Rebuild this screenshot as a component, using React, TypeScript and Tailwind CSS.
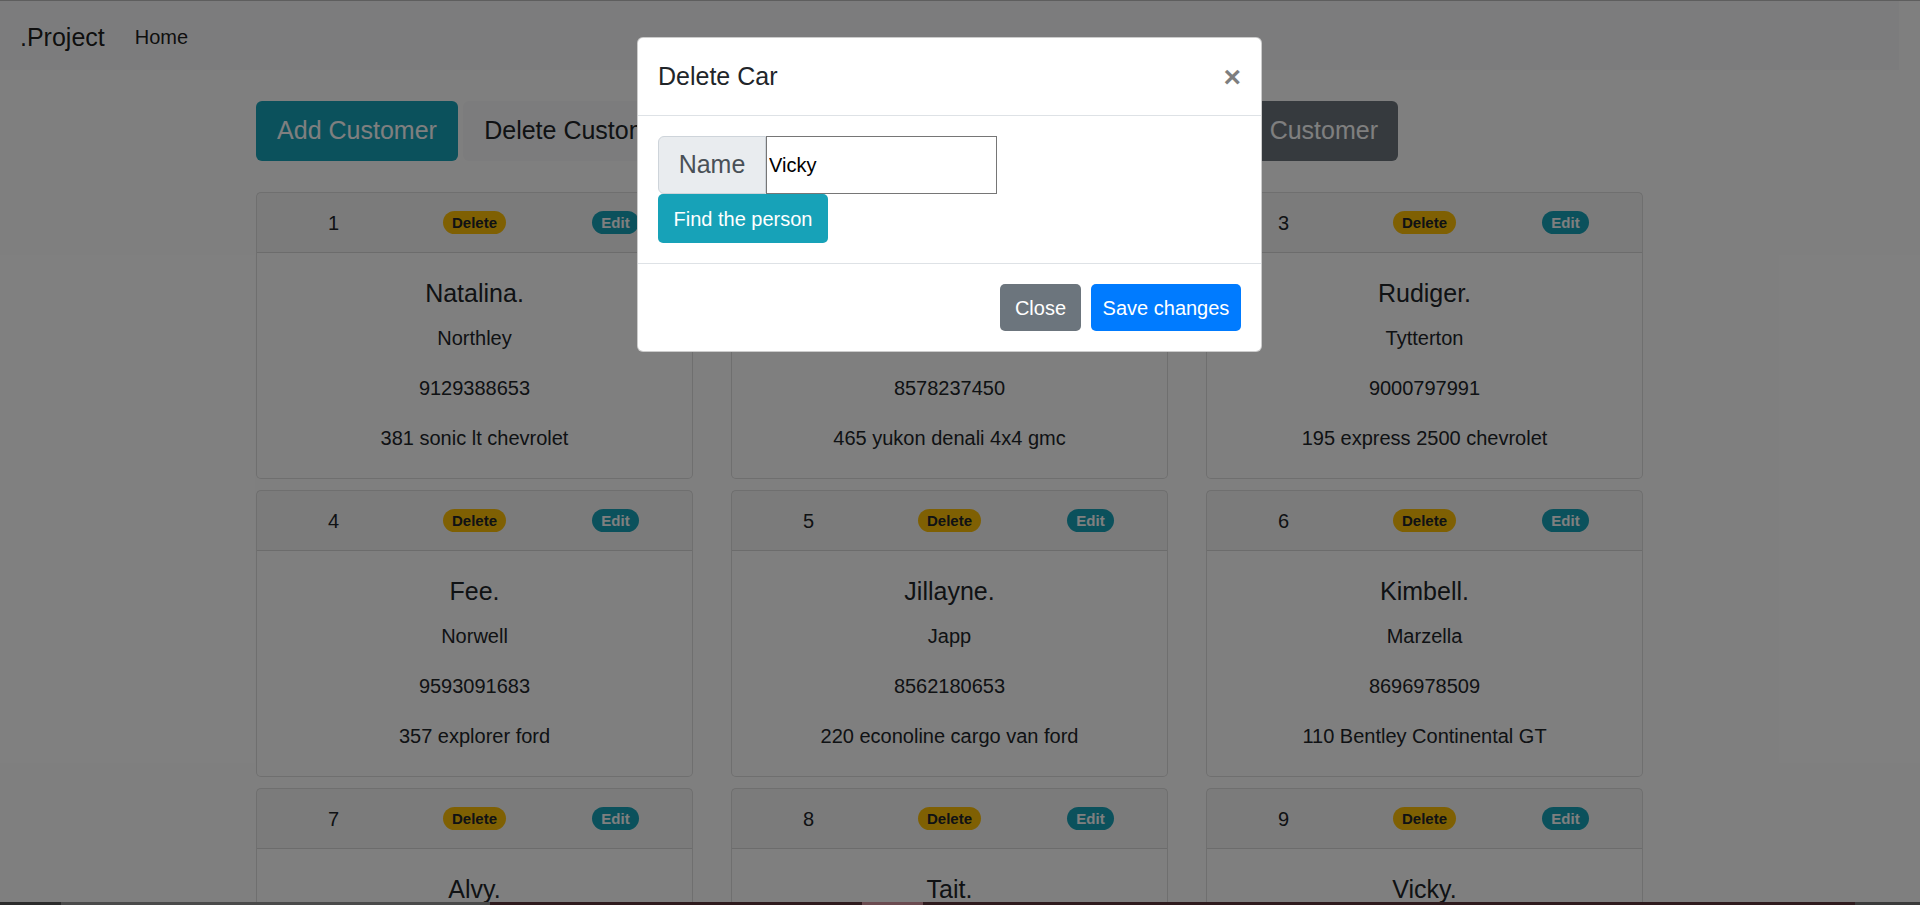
import React from "react";

interface Customer {
  id: number;
  name: string;
  city: string;
  phone: string;
  car: string;
}

const customers: Customer[] = [
  { id: 1, name: "Natalina.", city: "Northley", phone: "9129388653", car: "381 sonic lt chevrolet" },
  { id: 2, name: "Gerianne.", city: "Marlow", phone: "8578237450", car: "465 yukon denali 4x4 gmc" },
  { id: 3, name: "Rudiger.", city: "Tytterton", phone: "9000797991", car: "195 express 2500 chevrolet" },
  { id: 4, name: "Fee.", city: "Norwell", phone: "9593091683", car: "357 explorer ford" },
  { id: 5, name: "Jillayne.", city: "Japp", phone: "8562180653", car: "220 econoline cargo van ford" },
  { id: 6, name: "Kimbell.", city: "Marzella", phone: "8696978509", car: "110 Bentley Continental GT" },
  { id: 7, name: "Alvy.", city: "Brookfield", phone: "9812337640", car: "512 silverado 1500 chevrolet" },
  { id: 8, name: "Tait.", city: "Lindon", phone: "8722910543", car: "240 ranger ford" },
  { id: 9, name: "Vicky.", city: "Harwell", phone: "9045518276", car: "318 tahoe chevrolet" },
];

function CustomerCard({ c }: { c: Customer }) {
  return (
    <div className="flex flex-col rounded-[5px] border border-black/[0.125] bg-white">
      <div className="h-[60px] border-b border-black/[0.125] bg-black/[0.03] px-[25px]">
        <div className="-mx-[19px] grid h-full grid-cols-3 items-center text-center">
          <span className="text-[20px] leading-[30px]">{c.id}</span>
          <span>
            <span className="inline-block rounded-full bg-[#ffc107] px-[9px] py-[4px] text-[15px] font-bold leading-none text-[#212529]">
              Delete
            </span>
          </span>
          <span>
            <span className="inline-block rounded-full bg-[#17a2b8] px-[9px] py-[4px] text-[15px] font-bold leading-none text-white">
              Edit
            </span>
          </span>
        </div>
      </div>
      <div className="p-[25px] text-center">
        <h5 className="mb-[15px] text-[25px] font-medium leading-[30px]">{c.name}</h5>
        <p className="mb-[20px] text-[20px] leading-[30px]">{c.city}</p>
        <p className="mb-[20px] text-[20px] leading-[30px]">{c.phone}</p>
        <p className="text-[20px] leading-[30px]">{c.car}</p>
      </div>
    </div>
  );
}

export default function App() {
  return (
    <div className="relative h-[905px] w-[1920px] overflow-hidden bg-white font-['Liberation_Sans',Arial,sans-serif] text-[#212529]">
      {/* page under the backdrop */}
      <div className="pr-[21px]">
        <nav className="flex h-[70px] items-center bg-[#f8f9fa] px-[20px] pt-[4px]">
          <span className="mr-[20px] text-[25px] leading-[37px] text-black/90">.Project</span>
          <a className="px-[10px] text-[20px] leading-[30px] text-black/90">Home</a>
        </nav>

        <main className="mx-auto w-[1387px] pt-[31px]">
          <div className="flex gap-[5px]">
            <button className="flex h-[60px] w-[202px] items-center justify-center rounded-[6px] bg-[#17a2b8] text-[25px] text-white">
              Add Customer
            </button>
            <button className="flex h-[60px] w-[230px] items-center justify-center rounded-[6px] bg-[#f8f9fa] text-[25px] text-[#212529]">
              Delete Customer
            </button>
            <button className="flex h-[60px] w-[238px] items-center justify-center rounded-[6px] bg-[#ffc107] text-[25px] text-[#212529]">
              Update Customer
            </button>
            <button className="flex h-[60px] w-[246px] items-center justify-center rounded-[6px] bg-[#28a745] text-[25px] text-white">
              Show Customers
            </button>
            <button className="flex h-[60px] w-[206px] items-center justify-end rounded-[6px] bg-[#6c757d] pr-[20px] text-[25px] text-white">
              Find Customer
            </button>
          </div>

          <div className="mt-[31px] grid grid-cols-3 gap-x-[38px] gap-y-[11px]">
            {customers.map((c) => (
              <CustomerCard key={c.id} c={c} />
            ))}
          </div>
        </main>
      </div>

      {/* backdrop */}
      <div className="absolute inset-0 bg-black/50" />
      <div className="absolute left-0 right-0 top-0 h-px bg-[#5e5e5e]" />

      {/* modal */}
      <div className="absolute inset-0 flex items-start justify-center pr-[21px] pt-[37px]">
        <div className="w-[625px] rounded-[6px] border border-black/20 bg-white">
          <div className="flex items-center justify-between border-b border-[#dee2e6] p-[20px]">
            <h5 className="text-[25px] font-medium leading-[37px]">Delete Car</h5>
            <button className="text-[30px] font-bold leading-none text-black opacity-50">×</button>
          </div>
          <div className="p-[20px]">
            <div className="flex h-[58px]">
              <span className="flex w-[108px] items-center justify-center rounded-l-[6px] border border-[#ced4da] bg-[#e9ecef] text-[25px] text-[#495057]">
                Name
              </span>
              <input
                readOnly
                defaultValue="Vicky"
                className="w-[231px] border border-[#767676] bg-white px-[2px] text-[20px] text-black outline-none"
              />
            </div>
            <button className="flex h-[49px] w-[170px] items-center justify-center rounded-[5px] bg-[#17a2b8] text-[20px] text-white">
              Find the person
            </button>
          </div>
          <div className="flex justify-end gap-[10px] border-t border-[#dee2e6] p-[20px]">
            <button className="flex h-[47px] w-[81px] items-center justify-center rounded-[5px] bg-[#6c757d] text-[20px] text-white">
              Close
            </button>
            <button className="flex h-[47px] w-[150px] items-center justify-center rounded-[5px] bg-[#007bff] text-[20px] text-white">
              Save changes
            </button>
          </div>
        </div>
      </div>

      {/* strip along the bottom edge */}
      <div className="absolute bottom-0 left-0 right-0 flex h-[3px]">
        <div className="w-[61px] bg-[#2b2b2b]" />
        <div className="w-[429px] bg-[#4a4a4a]" />
        <div className="w-[372px] bg-[#2f1b1e]" />
        <div className="w-[61px] bg-[#6b4b50]" />
        <div className="w-[932px] bg-[#2f1b1e]" />
        <div className="flex-1 bg-[#3a3a3a]" />
      </div>
    </div>
  );
}
